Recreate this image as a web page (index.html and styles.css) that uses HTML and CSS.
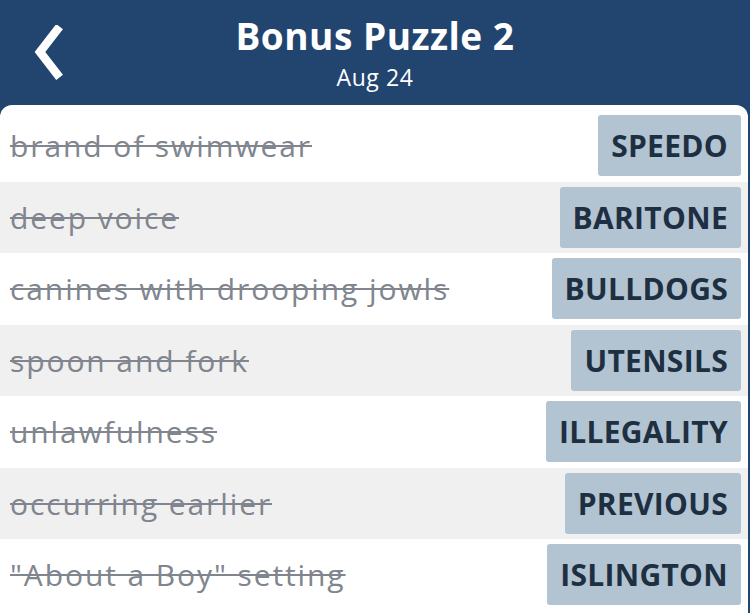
FILE: index.html
```html
<!DOCTYPE html>
<html lang="en">

<head>
    <meta charset="utf-8">
    <meta name="viewport" content="width=device-width, initial-scale=1.0">
    <title>Bonus Puzzle 2</title>
    <link rel="stylesheet" href="styles.css">
</head>

<body>
<header>
    <button class="tilbage" aria-label="Back">
        <svg width="40" height="56" viewBox="0 0 40 56">
            <polyline points="27,5 10,27 27,49" fill="none" stroke="#fff" stroke-width="8.5" stroke-linecap="square"/>
        </svg>
    </button>
    <div class="titel">
        <h1>Bonus Puzzle 2</h1>
        <p>Aug 24</p>
    </div>
</header>

<section id="liste">
    <div class="raekke"><span class="ledetraad">brand of swimwear</span><span class="svar">SPEEDO</span></div>
    <div class="raekke"><span class="ledetraad">deep voice</span><span class="svar">BARITONE</span></div>
    <div class="raekke"><span class="ledetraad">canines with drooping jowls</span><span class="svar">BULLDOGS</span></div>
    <div class="raekke"><span class="ledetraad">spoon and fork</span><span class="svar">UTENSILS</span></div>
    <div class="raekke"><span class="ledetraad">unlawfulness</span><span class="svar">ILLEGALITY</span></div>
    <div class="raekke"><span class="ledetraad">occurring earlier</span><span class="svar">PREVIOUS</span></div>
    <div class="raekke"><span class="ledetraad">"About a Boy" setting</span><span class="svar">ISLINGTON</span></div>
</section>
</body>

</html>
```

FILE: styles.css
```css
* {
    box-sizing: border-box;
    padding: 0;
    margin: 0;
}

body {
    background-color: #22456f;
    font-family: "Open Sans", "Liberation Sans", sans-serif;
    width: 750px;
    height: 613px;
    overflow: hidden;
}

header {
    height: 105px;
    display: flex;
    justify-content: center;
    align-items: flex-start;
    position: relative;
    color: white;
}

.tilbage {
    position: absolute;
    left: 30px;
    top: 25px;
    background: none;
    border: none;
}

.titel {
    text-align: center;
    padding-top: 10px;
}

.titel h1 {
    font-size: 37px;
    font-weight: 700;
    line-height: 52px;
    letter-spacing: 0.5px;
}

.titel p {
    font-size: 23px;
    line-height: 30px;
    letter-spacing: 0.6px;
}

#liste {
    background-color: white;
    width: 748px;
    height: 508px;
    border-radius: 12px 12px 0 0;
    padding-top: 5px;
}

.raekke {
    height: 71.5px;
    display: flex;
    align-items: center;
    justify-content: space-between;
    padding: 0 7px 0 10px;
}

.raekke:nth-child(even) {
    background-color: #f0f0f0;
}

.ledetraad {
    font-size: 30px;
    color: #80858e;
    letter-spacing: 1.9px;
    text-decoration: line-through;
    text-decoration-thickness: 2px;
}

.svar {
    background-color: #b2c3d1;
    color: #1e2f42;
    font-size: 30px;
    font-weight: 700;
    letter-spacing: 0.3px;
    height: 61px;
    line-height: 61px;
    padding: 0 13px;
    border-radius: 3px;
}
```
